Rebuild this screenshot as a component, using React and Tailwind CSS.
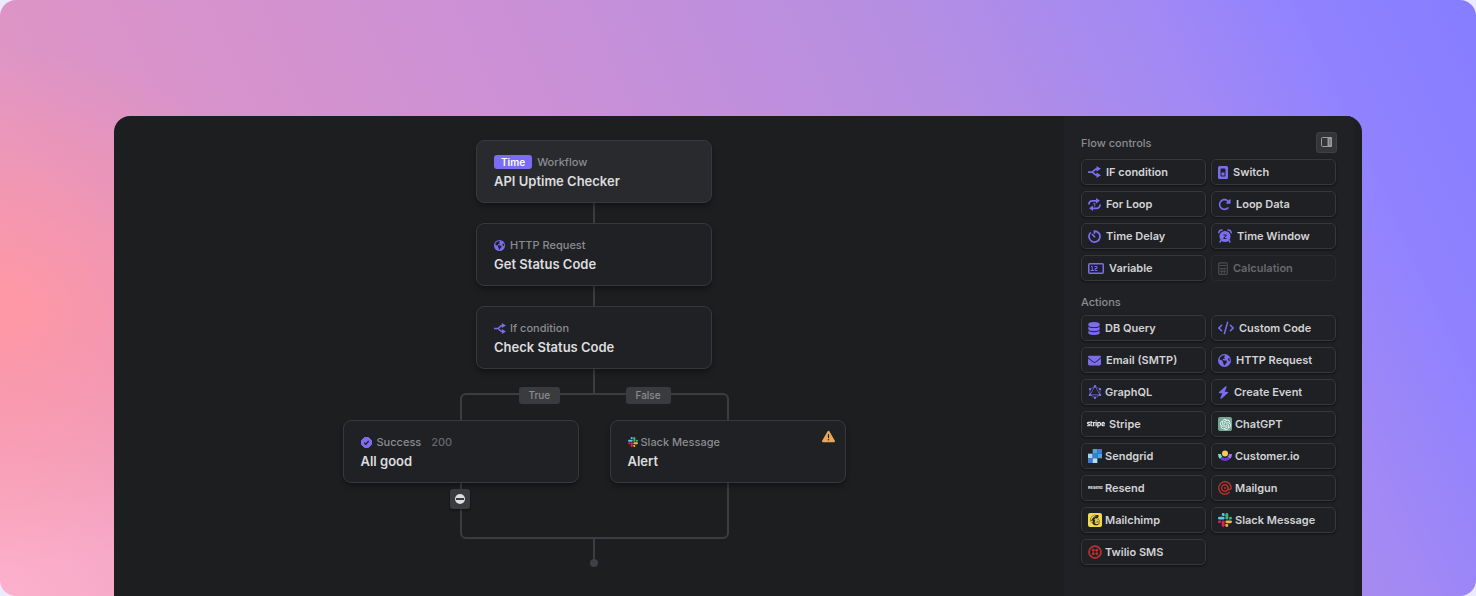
import { FaEarthAmericas, FaDatabase, FaCode, FaEnvelope, FaBolt, FaTriangleExclamation, FaRotateRight, FaMailchimp, FaStripe } from 'react-icons/fa6';
import { SiGraphql, SiMailgun, SiOpenai } from 'react-icons/si';

const IfIcon = ({ className }) => (
  <svg viewBox="0 0 26 24" className={className} fill="none" stroke="currentColor" strokeWidth="3.500" aria-hidden="true">
    <path d="M0 12h8C12 12 11 5.500 19 5.500M8 12c4 0 3 6.500 11 6.500" />
    <path d="M17 0l9 5.500-9 5.500zM17 13l9 5.500-9 5.500z" fill="currentColor" stroke="none" />
  </svg>
);

const SwitchIcon = () => (
  <svg viewBox="0 0 20 26" className="w-[10px] h-[13px]" aria-hidden="true">
    <path
      fill="currentColor"
      fillRule="evenodd"
      d="M3 0h14a3 3 0 0 1 3 3v20a3 3 0 0 1-3 3H3a3 3 0 0 1-3-3V3a3 3 0 0 1 3-3zm4 5a2 2 0 0 0-2 2v12a2 2 0 0 0 2 2h6a2 2 0 0 0 2-2V7a2 2 0 0 0-2-2zm0 8h6v6H7z"
    />
  </svg>
);

const ForLoopIcon = () => (
  <svg viewBox="0 0 26 26" className="size-[13px]" fill="none" stroke="currentColor" strokeWidth="3.500" aria-hidden="true">
    <path d="M2 13v-1a6.500 6.500 0 0 1 6.500-6.500H18M24 13v1a6.500 6.500 0 0 1-6.500 6.500H8" />
    <path d="M16 0l8 5.500-8 5.500zM10 15l-8 5.500L10 26z" fill="currentColor" stroke="none" />
    <path d="M11 11l2.500-1v7" strokeWidth="2" />
  </svg>
);

const DelayIcon = () => (
  <svg viewBox="0 0 26 26" className="size-[13px]" fill="none" stroke="currentColor" strokeWidth="3.500" strokeLinecap="round" aria-hidden="true">
    <path d="M13 6V2a11 11 0 1 1-8.500 4" />
    <path d="M9 9l4 4.500" />
  </svg>
);

const AlarmIcon = () => (
  <svg viewBox="0 0 28 28" className="size-[14px]" fill="none" stroke="currentColor" aria-hidden="true">
    <circle cx="14" cy="15" r="11" fill="currentColor" stroke="none" />
    <path d="M1.500 7.500C2 4 4.500 2 8 2M26.500 7.500C26 4 23.500 2 20 2M6 23l-2 3M22 23l2 3" strokeWidth="3" strokeLinecap="round" />
    <path d="M11 12h6l-6 7h6" stroke="#202124" strokeWidth="2" />
  </svg>
);

const VariableIcon = () => (
  <svg viewBox="0 0 32 22" className="w-[16px] h-[11px]" fill="none" stroke="currentColor" strokeWidth="3" aria-hidden="true">
    <rect x="1.500" y="1.500" width="29" height="19" rx="2" />
    <path d="M6 7h2.500v8M5 15h7M13 7h5v4h-4v4h5" strokeWidth="2" />
  </svg>
);

const CalculatorIcon = () => (
  <svg viewBox="0 0 20 26" className="w-[10px] h-[13px]" fill="none" stroke="currentColor" strokeWidth="2.500" aria-hidden="true">
    <rect x="1.500" y="1.500" width="17" height="23" rx="2" />
    <path d="M4 7h12M4 13h12M4 18.500h12M7.500 13v10M12.500 13v10" strokeWidth="2" />
  </svg>
);

const SlackIcon = ({ className }) => (
  <svg viewBox="0 0 24 24" className={className} aria-hidden="true">
    <path fill="#e01e5a" d="M5.042 15.165a2.528 2.528 0 0 1-2.52 2.523A2.528 2.528 0 0 1 0 15.165a2.527 2.527 0 0 1 2.522-2.520h2.520v2.520zM6.313 15.165a2.527 2.527 0 0 1 2.521-2.520 2.527 2.527 0 0 1 2.521 2.520v6.313A2.528 2.528 0 0 1 8.834 24a2.528 2.528 0 0 1-2.521-2.522v-6.313z" />
    <path fill="#5ac5ee" d="M8.834 5.042a2.528 2.528 0 0 1-2.521-2.520A2.528 2.528 0 0 1 8.834 0a2.528 2.528 0 0 1 2.521 2.522v2.520H8.834zM8.834 6.313a2.528 2.528 0 0 1 2.521 2.521 2.528 2.528 0 0 1-2.521 2.521H2.522A2.528 2.528 0 0 1 0 8.834a2.528 2.528 0 0 1 2.522-2.521h6.312z" />
    <path fill="#3fb27f" d="M18.956 8.834a2.528 2.528 0 0 1 2.522-2.521A2.528 2.528 0 0 1 24 8.834a2.528 2.528 0 0 1-2.522 2.521h-2.522V8.834zM17.688 8.834a2.528 2.528 0 0 1-2.523 2.521 2.527 2.527 0 0 1-2.520-2.521V2.522A2.527 2.527 0 0 1 15.165 0a2.528 2.528 0 0 1 2.523 2.522v6.312z" />
    <path fill="#ecb73c" d="M15.165 18.956a2.528 2.528 0 0 1 2.523 2.522A2.528 2.528 0 0 1 15.165 24a2.527 2.527 0 0 1-2.520-2.522v-2.522h2.520zM15.165 17.688a2.527 2.527 0 0 1-2.520-2.523 2.526 2.526 0 0 1 2.520-2.520h6.313A2.527 2.527 0 0 1 24 15.165a2.528 2.528 0 0 1-2.522 2.523h-6.313z" />
  </svg>
);

const SendgridIcon = () => (
  <svg viewBox="0 0 24 24" className="size-[14px]" aria-hidden="true">
    <path fill="#a5d4f3" d="M0 8h8v8H0z" />
    <path fill="#3f7bd0" d="M0 16h8v8H0zM16 0h8v8h-8z" />
    <path fill="#4fa3e3" d="M8 0h8v8H8zM16 8h8v8h-8z" />
    <path fill="#3183d2" d="M8 8h8v8H8z" />
    <path fill="#b4def6" d="M8 16h8v8H8z" />
  </svg>
);

const CustomerIcon = () => (
  <svg viewBox="0 0 28 28" className="size-[14px]" aria-hidden="true">
    <circle cx="14" cy="9" r="6" fill="#f5cf52" />
    <path d="M0 10a14 14 0 0 0 4 10l4.500-4.500A8 8 0 0 1 6 10z" fill="#6fe0ae" />
    <path d="M28 10a14 14 0 0 1-4 10l-4.500-4.500A8 8 0 0 0 22 10z" fill="#a774f0" />
    <path d="M4 20l4.500-4.500a8 8 0 0 0 11 0L24 20a14 14 0 0 1-20 0z" fill="#6a35d9" />
  </svg>
);

const TwilioIcon = () => (
  <svg viewBox="0 0 28 28" className="size-[14px] text-[#b8312f]" fill="currentColor" aria-hidden="true">
    <circle cx="14" cy="14" r="12" fill="none" stroke="currentColor" strokeWidth="3.500" />
    <circle cx="10.500" cy="10.500" r="2.800" />
    <circle cx="17.500" cy="10.500" r="2.800" />
    <circle cx="10.500" cy="17.500" r="2.800" />
    <circle cx="17.500" cy="17.500" r="2.800" />
  </svg>
);

const flowControls = [
  { label: 'IF condition', icon: <IfIcon className="w-[13px] h-[12px]" /> },
  { label: 'Switch', icon: <SwitchIcon /> },
  { label: 'For Loop', icon: <ForLoopIcon /> },
  { label: 'Loop Data', icon: <FaRotateRight className="size-[13px]" /> },
  { label: 'Time Delay', icon: <DelayIcon /> },
  { label: 'Time Window', icon: <AlarmIcon /> },
  { label: 'Variable', icon: <VariableIcon /> },
  { label: 'Calculation', icon: <CalculatorIcon />, disabled: true },
];

const actions = [
  { label: 'DB Query', icon: <FaDatabase className="w-[12px] h-[13px]" /> },
  { label: 'Custom Code', icon: <FaCode className="size-[16px]" /> },
  { label: 'Email (SMTP)', icon: <FaEnvelope className="size-[13px]" /> },
  { label: 'HTTP Request', icon: <FaEarthAmericas className="size-[13px]" /> },
  { label: 'GraphQL', icon: <SiGraphql className="size-[14px]" />, logo: true },
  { label: 'Create Event', icon: <FaBolt className="w-[11px] h-[13px]" /> },
  { label: 'Stripe', icon: <FaStripe className="size-[18px] -mx-px text-gray-200" /> },
  {
    label: 'ChatGPT',
    icon: (
      <span className="size-[14px] rounded-xs bg-[#74a696] text-white flex items-center justify-center">
        <SiOpenai className="size-[11px]" />
      </span>
    ),
    logo: true,
  },
  { label: 'Sendgrid', icon: <SendgridIcon />, logo: true },
  { label: 'Customer.io', icon: <CustomerIcon />, logo: true },
  { label: 'Resend', icon: <span className="w-[14px] text-[4px] font-bold text-gray-200">Resend</span>, logo: true },
  { label: 'Mailgun', icon: <SiMailgun className="size-[14px] text-[#b8312f]" />, logo: true },
  {
    label: 'Mailchimp',
    icon: (
      <span className="size-[14px] rounded-xs bg-[#f3d94e] text-[#26241c] flex items-center justify-center">
        <FaMailchimp className="size-[12px]" />
      </span>
    ),
    logo: true,
  },
  { label: 'Slack Message', icon: <SlackIcon className="size-[14px]" />, logo: true },
  { label: 'Twilio SMS', icon: <TwilioIcon />, logo: true },
];

const PaletteItem = ({ label, icon, logo, disabled }) => (
  <button
    type="button"
    disabled={disabled}
    className={`flex items-center h-[26px] px-[6px] rounded-[5px] border text-[11px] font-semibold whitespace-nowrap ${
      logo ? 'gap-[3px]' : 'gap-[5px]'
    } ${
      disabled
        ? 'border-[#2a2b2e] text-[#67686b]'
        : 'border-[#37383c] bg-[#1f2024] text-[#d2d3d5] shadow-sm shadow-black/40'
    }`}
  >
    <span className={`flex items-center shrink-0 ${disabled ? 'text-[#4b4c4f]' : 'text-[#7b6cf0]'}`}>{icon}</span>
    {label}
  </button>
);

const PaletteGrid = ({ items }) => (
  <div className="grid grid-cols-2 gap-x-[5px] gap-y-[6px]">
    {items.map((item) => (
      <PaletteItem key={item.label} {...item} />
    ))}
  </div>
);

const Node = ({ kind, title, icon, note, highlighted, children }) => (
  <article
    className={`relative w-[236px] h-[63px] px-[17px] pt-[13px] rounded-lg border border-[#38393d] shadow-md shadow-black/30 ${
      highlighted ? 'bg-[#292a2e]' : 'bg-[#202125]'
    }`}
  >
    <div className="flex items-center h-4 text-[11px] font-medium text-[#8b8c90]">
      {icon}
      <span>{kind}</span>
      {note && <span className="ml-[10px] text-[#66676b]">{note}</span>}
    </div>
    <h3 className="text-[13px] leading-[22px] font-semibold text-[#dcdddf]">{title}</h3>
    {children}
  </article>
);

const Line = ({ className }) => <div className={`w-[2px] bg-[#3c3d41] ${className}`} />;

const App = () => {
  return (
    <div className="bg-[#eceafe] font-[Inter,sans-serif]">
      <div className="min-h-screen flex rounded-2xl overflow-hidden px-[114px] pt-[116px] bg-[radial-gradient(ellipse_320px_260px_at_0%_52%,#ff97a4_0%,#ff97a400_100%),radial-gradient(ellipse_400px_260px_at_0%_100%,#fdb0cb_0%,#fdb0cb00_100%),linear-gradient(65deg,#f0a0bc_0%,#dd94c6_16%,#cb90d6_44%,#b58ee2_67%,#a289f4_81%,#9082ff_90%,#857dff_100%)]">
        <div className="flex grow rounded-t-2xl overflow-hidden bg-[#1d1e20]">
          {/* Workflow canvas */}
          <main className="grow flex flex-col items-center pt-6 pl-[10px]">
            <Node
              kind="Workflow"
              title="API Uptime Checker"
              highlighted
              icon={<span className="h-[14px] px-[7px] mr-[5px] rounded-[3px] bg-[#7b6cf6] text-white text-[10px] leading-[14px] font-semibold">Time</span>}
            />
            <Line className="h-[20px]" />
            <Node
              kind="HTTP Request"
              title="Get Status Code"
              icon={<FaEarthAmericas className="size-[11px] mr-[5px] text-[#7b6cf0]" />}
            />
            <Line className="h-[20px]" />
            <Node
              kind="If condition"
              title="Check Status Code"
              icon={<IfIcon className="w-[12px] h-[11px] mr-1 text-[#7b6cf0]" />}
            />
            <Line className="h-[24px]" />

            <div className="relative flex gap-[31px] pt-[27px] pb-[56px]">
              <div className="absolute inset-y-0 inset-x-[117px] rounded-md border-2 border-[#3c3d41]" />
              <span className="absolute -top-[6px] left-[176px] h-[17px] px-[10px] rounded-[3px] bg-[#3a3b3f] text-[10px] leading-[17px] font-medium text-[#8b8c90]">True</span>
              <span className="absolute -top-[6px] left-[283px] h-[17px] px-[10px] rounded-[3px] bg-[#3a3b3f] text-[10px] leading-[17px] font-medium text-[#8b8c90]">False</span>
              <Node
                kind="Success"
                title="All good"
                note="200"
                icon={
                  <svg viewBox="0 0 22 22" className="size-[11px] mr-[5px]" aria-hidden="true">
                    <path d="M7 1h8l6 6v8l-6 6H7l-6-6V7z" fill="#7b6cf0" stroke="#7b6cf0" strokeWidth="2" strokeLinejoin="round" />
                    <path d="M6.500 11.500l3 3 6-6.500" fill="none" stroke="#202125" strokeWidth="2.500" />
                  </svg>
                }
              >
                <button
                  type="button"
                  aria-label="Remove step"
                  className="absolute top-[68px] left-[106px] size-5 rounded-[3px] bg-[#3a3b3f] flex items-center justify-center shadow-sm shadow-black/40"
                >
                  <span className="size-[10px] rounded-full bg-[#dcdddf] flex items-center justify-center">
                    <span className="w-[8px] h-[2px] bg-[#3a3b3f]" />
                  </span>
                </button>
              </Node>
              <Node kind="Slack Message" title="Alert" icon={<SlackIcon className="size-[10px] mr-[3px]" />}>
                <FaTriangleExclamation className="absolute top-[9px] right-[10px] size-[13px] text-[#e9a857]" />
              </Node>
            </div>
            <Line className="h-[20px]" />
            <div className="size-[8px] rounded-full bg-[#3f4044]" />
          </main>

          {/* Palette */}
          <aside className="w-[290px] mr-2 pl-[17px] pr-[18px] pt-[15px] bg-[#202124]">
            <div className="flex items-center justify-between h-6 mb-1 -mr-px">
              <h2 className="text-[11px] leading-6 font-medium text-[#8b8c90]">Flow controls</h2>
              <button
                type="button"
                aria-label="Toggle panel"
                className="size-[21px] mb-[2px] rounded-[3px] border border-[#3f4043] bg-[#343538] flex items-center justify-center"
              >
                <svg viewBox="0 0 22 20" className="w-[11px] h-[10px] text-[#9a9b9e]" fill="none" stroke="currentColor" strokeWidth="2" aria-hidden="true">
                  <rect x="1" y="1" width="20" height="18" rx="2" />
                  <path d="M14 1h7v18h-7z" fill="currentColor" />
                  <path d="M16 6h3M16 10h3M16 14h3" stroke="#343538" strokeWidth="1.500" />
                </svg>
              </button>
            </div>
            <PaletteGrid items={flowControls} />
            <h2 className="h-6 mt-[9px] mb-px text-[11px] leading-6 font-medium text-[#8b8c90]">Actions</h2>
            <PaletteGrid items={actions} />
          </aside>
        </div>
      </div>
    </div>
  );
};

export default App;
